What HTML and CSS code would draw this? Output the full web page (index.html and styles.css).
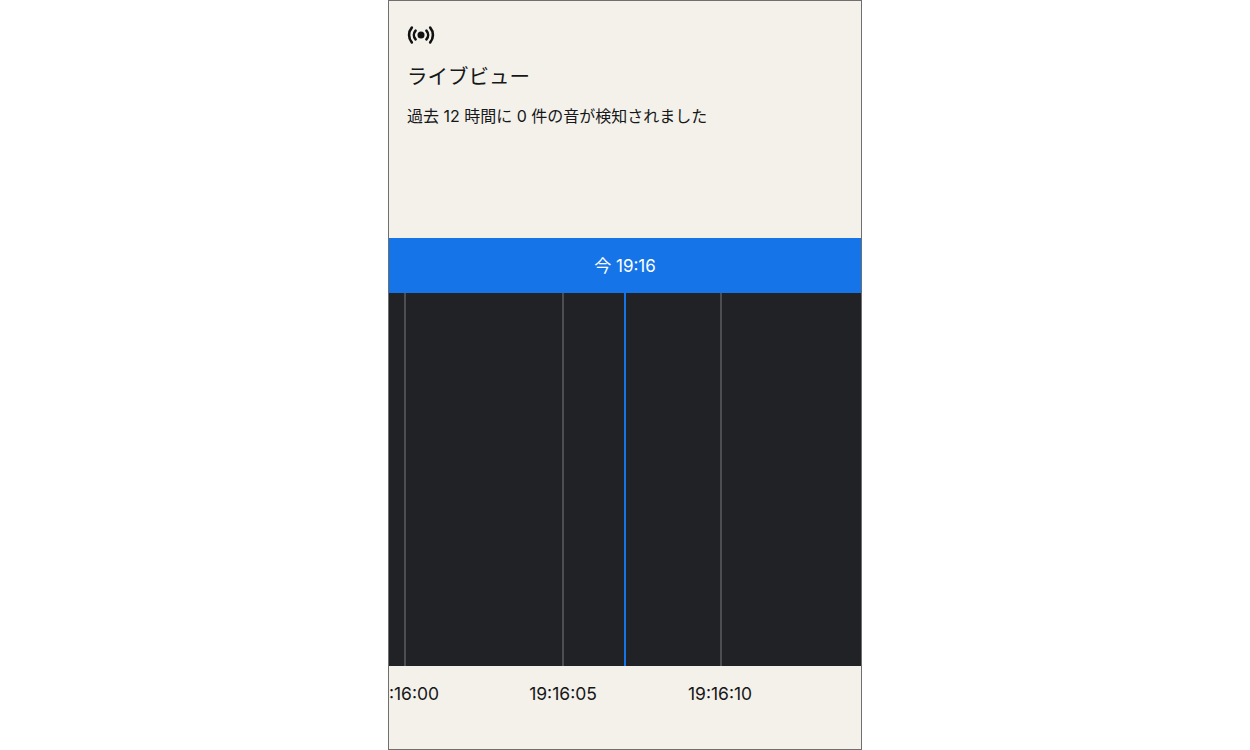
FILE: index.html
```html
<!DOCTYPE html>
<html lang="ja">
<head>
    <meta charset="UTF-8">
    <title>ライブビュー</title>
    <meta name="viewport" content="width=device-width, initial-scale=1">
    <link rel="stylesheet" href="styles.css">
</head>
<body>
<div class="phone">
    <header class="summary">
        <svg class="live-icon" width="28" height="20" viewBox="0 0 28 20" fill="none" stroke="#111" stroke-width="2.6" stroke-linecap="round">
            <circle cx="14" cy="10" r="3.5" fill="#111" stroke="none"/>
            <path d="M8.6 5.6a6.6 6.6 0 0 0 0 8.8"/>
            <path d="M19.4 5.6a6.6 6.6 0 0 1 0 8.8"/>
            <path d="M4.8 2.6a11.4 11.4 0 0 0 0 14.8"/>
            <path d="M23.2 2.6a11.4 11.4 0 0 1 0 14.8"/>
        </svg>
        <h1 class="summary__title">ライブビュー</h1>
        <p class="summary__text">過去 12 時間に 0 件の音が検知されました</p>
    </header>

    <div class="now-bar">今 19:16</div>

    <div class="timeline">
        <span class="timeline__tick" style="left: 15px"></span>
        <span class="timeline__tick" style="left: 173px"></span>
        <span class="timeline__tick" style="left: 331px"></span>
        <span class="timeline__now" style="left: 235px"></span>
    </div>

    <footer class="axis">
        <span class="axis__label" style="left: 16px">19:16:00</span>
        <span class="axis__label" style="left: 174px">19:16:05</span>
        <span class="axis__label" style="left: 331px">19:16:10</span>
    </footer>
</div>
</body>
</html>
```

FILE: styles.css
```css
* {
    margin: 0;
    box-sizing: border-box;
}

html, body {
    height: 100%;
    background: #fff;
}

body {
    overflow: hidden;
    font-family: "Inter", "Noto Sans CJK JP", sans-serif;
    color: #16171a;
}

.phone {
    width: 474px;
    height: 750px;
    margin: 0 auto;
    display: flex;
    flex-direction: column;
    overflow: hidden;
    border: 1px solid #6f6f6f;
    background: #f3f1e9;
}

/*summary*/

.summary {
    height: 237px;
    padding: 24px 18px 0;
}

.live-icon {
    display: block;
    margin-bottom: 20px;
}

.summary__title {
    font-size: 20.5px;
    font-weight: 400;
    line-height: 24px;
    margin-bottom: 17px;
}

.summary__text {
    font-size: 16px;
    line-height: 20px;
}

/*now bar*/

.now-bar {
    height: 55px;
    padding-bottom: 2px;
    display: flex;
    align-items: center;
    justify-content: center;
    background: #1574e8;
    color: #fff;
    font-size: 17px;
}

/*timeline*/

.timeline {
    position: relative;
    height: 373px;
    background: #212226;
}

.timeline__tick, .timeline__now {
    position: absolute;
    top: 0;
    bottom: 0;
    width: 2px;
}

.timeline__tick {
    background: #4d4e52;
}

.timeline__now {
    background: #1574e8;
}

/*axis*/

.axis {
    position: relative;
    flex: 1;
}

.axis__label {
    position: absolute;
    top: 16px;
    transform: translateX(-50%);
    font-size: 17.5px;
    line-height: 24px;
    white-space: nowrap;
}
```
